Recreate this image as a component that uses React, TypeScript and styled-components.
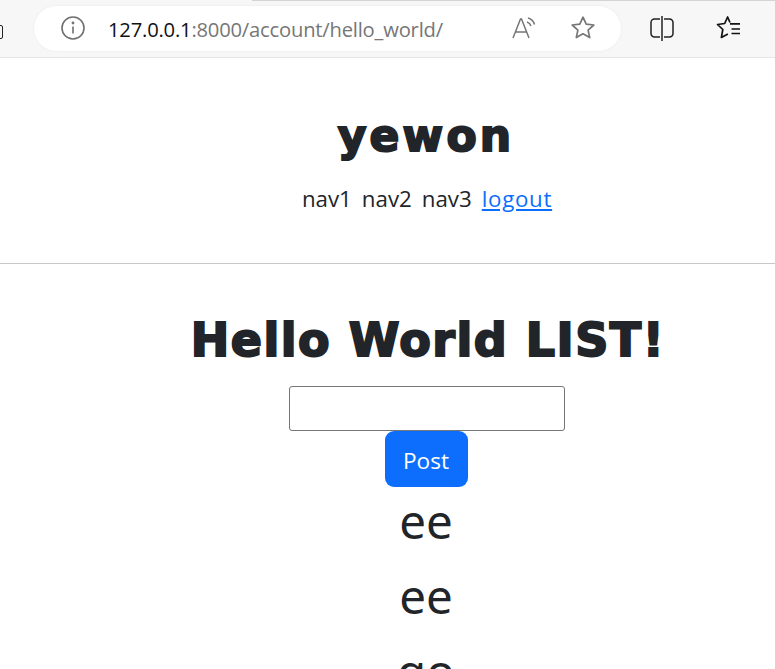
import React from "react";
import styled, { createGlobalStyle } from "styled-components";

const Global = createGlobalStyle`
  html, body { margin: 0; padding: 0; background: #fff; overflow: hidden; }
  body { font-family: "Open Sans", "Noto Sans", sans-serif; color: #212529; }
`;
const Viewport = styled.div`
  width: 775px; height: 669px; overflow: hidden; display: flex; flex-direction: column;
`;
const BrowserBar = styled.div`
  position: relative; flex: none; height: 58px; box-sizing: border-box; background: #f7f7f7;
  border-bottom: 1px solid #e6e6e6; display: flex; align-items: center;
  padding: 0 0 1px 34px;
`;
const TabEdge = styled.div`
  position: absolute; top: 0; left: 252px; right: 0; height: 1px; background: #d4d4d4;
`;
const CutIcon = styled.div`
  position: absolute; left: -8px; top: 25px; width: 11px; height: 14px; border: 1.5px solid #222; border-radius: 2px; box-sizing: border-box;
`;
const UrlPill = styled.div`
  width: 587px; height: 45px; background: #fff; border-radius: 23px; display: flex; align-items: center;
  box-sizing: border-box; padding: 0 25px 0 26px; box-shadow: 0 0 3px rgba(0,0,0,.06);
`;
const Url = styled.div`
  margin-left: 22px; flex: 1; font-size: 20.2px; letter-spacing: -0.2px; color: #767676; white-space: nowrap;
  font-family: "Open Sans", sans-serif; line-height: 1; padding-top: 2px;
`;
const Host = styled.span` color: #111; `;
const PillIcons = styled.div` display: flex; align-items: center; gap: 33px; `;
const BarIcons = styled.div` display: flex; align-items: center; gap: 41px; margin-left: 28px; `;
const Page = styled.div` width: 852px; display: flex; flex-direction: column; align-items: center; flex: none; `;
const Header = styled.header`
  width: 100%; height: 205px; box-sizing: border-box; padding-top: 49px; display: flex; flex-direction: column; align-items: center;
`;
const Stencil = styled.div`
  font-family: "DejaVu Sans", sans-serif; font-weight: 700; color: #212529; white-space: nowrap;
  -webkit-text-stroke: 2px #212529; line-height: 1;
`;
const Brand = styled(Stencil)`
  font-size: 44px; height: 58px; line-height: 58px; letter-spacing: 3.2px;
`;
const Nav = styled.nav`
  display: flex; gap: 10px; font-size: 22.3px; line-height: 36px; margin: 16px 0 0 2px;
`;
const NavLink = styled.a<{ $link?: boolean }>`
  color: ${p => (p.$link ? "#0d6efd" : "#212529")};
  text-decoration: ${p => (p.$link ? "underline" : "none")};
  letter-spacing: ${p => (p.$link ? "0.7px" : "0")};
`;
const Rule = styled.hr`
  width: 100%; margin: 0; border: none; height: 1px; background: #c8c8c8;
`;
const Title = styled(Stencil)`
  font-size: 46px; height: 60px; line-height: 60px; margin: 46px 0 0 4px; letter-spacing: 1.5px;
`;
const Field = styled.input`
  display: block; box-sizing: border-box; width: 276px; height: 45px; margin: 16px 0 0 2px; border: 1px solid #767676; border-radius: 3px; background: #fff; padding: 0;
`;
const PostButton = styled.button`
  display: block; box-sizing: border-box; width: 83px; height: 56px; border: none; border-radius: 9px; background: #0d6efd; color: #fff;
  font-family: inherit; font-size: 22.6px; padding: 2px 0 0;
`;
const Entry = styled.div`
  font-family: "Noto Sans", sans-serif; font-size: 47.5px; height: 75px; line-height: 67px; color: #212529; text-align: center;
`;

const AddressInfoIcon = () => (
  <svg width="26" height="26" viewBox="0 0 26 26" fill="none" stroke="#6f6f6f" strokeWidth="1.6">
    <circle cx="13" cy="13" r="11" />
    <path d="M13 11.5v7" />
    <circle cx="13" cy="8" r="0.6" fill="#6f6f6f" />
  </svg>
);
const ReadAloudIcon = () => (
  <svg width="26" height="26" viewBox="0 0 26 26" fill="none" stroke="#767676" strokeWidth="1.5">
    <path d="M2 23 9.5 4h1L18 23M5 17h11" />
    <path d="M16 7c2 .6 3.4 2 4 4M17 3c3.3.9 5.6 3.2 6.5 6.5" />
  </svg>
);
const StarIcon = () => (
  <svg width="26" height="26" viewBox="0 0 26 26" fill="none" stroke="#767676" strokeWidth="1.7" strokeLinejoin="round">
    <path d="M13 2.2l3.2 7 7.6.8-5.7 5.1 1.6 7.5-6.7-3.8-6.7 3.8 1.6-7.5L2.2 10l7.6-.8z" />
  </svg>
);
const SplitIcon = () => (
  <svg width="26" height="26" viewBox="0 0 26 26" fill="none" stroke="#222" strokeWidth="1.5">
    <path d="M11 4H5.500A3.500 3.500 0 0 0 2 7.500v11A3.500 3.500 0 0 0 5.500 22H11M15 4h5.500A3.500 3.500 0 0 1 24 7.500v11a3.500 3.500 0 0 1-3.500 3.500H15" />
    <path d="M13 1v25" />
  </svg>
);
const FavoritesIcon = () => (
  <svg width="26" height="26" viewBox="0 0 26 26" fill="none" stroke="#111" strokeWidth="1.7" strokeLinejoin="round">
    <path d="M14 7.500 11.600 2 8.700 8.500 1.500 9.500l5.300 5-1.400 8 6.500-3.500" />
    <path d="M14 8.800h10M15.500 14h8.500M15.500 18.500h8.500" />
  </svg>
);

export default function App() {
  return (
    <Viewport>
      <Global />
      <BrowserBar>
        <TabEdge />
        <CutIcon />
        <UrlPill>
          <AddressInfoIcon />
          <Url><Host>127.0.0.1</Host>:8000/account/hello_world/</Url>
          <PillIcons>
            <ReadAloudIcon />
            <StarIcon />
          </PillIcons>
        </UrlPill>
        <BarIcons>
          <SplitIcon />
          <FavoritesIcon />
        </BarIcons>
      </BrowserBar>
      <Page>
        <Header>
          <Brand>yewon</Brand>
          <Nav>
            <NavLink>nav1</NavLink>
            <NavLink>nav2</NavLink>
            <NavLink>nav3</NavLink>
            <NavLink $link href="#">logout</NavLink>
          </Nav>
        </Header>
        <Rule />
        <Title>Hello World LIST!</Title>
        <Field />
        <PostButton>Post</PostButton>
        <Entry>ee</Entry>
        <Entry>ee</Entry>
        <Entry>go</Entry>
      </Page>
    </Viewport>
  );
}
